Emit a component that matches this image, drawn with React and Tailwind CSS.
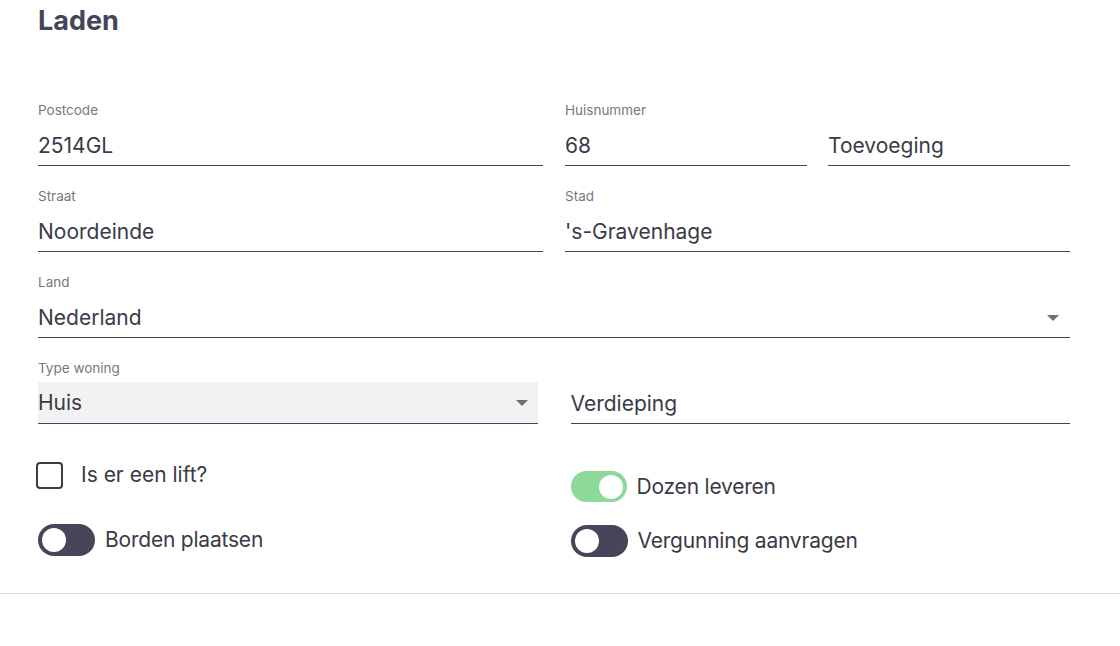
import React from "react";

const FONT = { fontFamily: "Inter, 'Liberation Sans', sans-serif" };

function Arrow() {
  return (
    <svg width="12" height="6" viewBox="0 0 12 6" className="shrink-0">
      <path d="M0 0 L12 0 L6 6 Z" fill="#6f6f74" />
    </svg>
  );
}

function Field({ label, value, select }) {
  return (
    <div className="flex flex-col">
      <div className="h-4 text-[13.5px] leading-4 text-[#77777d]">{label}</div>
      <div className="mt-2 flex h-10 items-center justify-between border-b border-[#45454d] text-[21px] text-[#3b3a46]">
        <span>{value}</span>
        {select && (
          <span className="mr-[11px]">
            <Arrow />
          </span>
        )}
      </div>
    </div>
  );
}

function Toggle({ on, label }) {
  return (
    <div className="flex items-center">
      <div
        className={
          on
            ? "flex h-[31px] w-[56px] items-center justify-end rounded-full bg-[#8cd99a] px-[4px]"
            : "flex h-[32px] w-[57px] items-center justify-start rounded-full bg-[#46455a] px-[4px]"
        }
      >
        <div className="h-[24px] w-[24px] rounded-full bg-white" />
      </div>
      <span className="ml-[10px] text-[21px] tracking-[-0.01em] text-[#3b3a46]">{label}</span>
    </div>
  );
}

export default function App() {
  return (
    <div className="h-[646px] w-[1120px] bg-white" style={FONT}>
      <div className="pl-[38px] pr-[50px]">
        <h1 className="pt-[5px] text-[27px] font-bold leading-8 text-[#45445a]">Laden</h1>
        <div className="mt-[65px] grid grid-cols-2 gap-x-[22px] gap-y-[22px]">
          <Field label="Postcode" value="2514GL" />
          <div className="grid grid-cols-2 gap-x-[21px]">
            <Field label="Huisnummer" value="68" />
            <Field label="" value="Toevoeging" />
          </div>
          <Field label="Straat" value="Noordeinde" />
          <Field label="Stad" value="'s-Gravenhage" />
          <div className="col-span-2">
            <Field label="Land" value="Nederland" select />
          </div>
        </div>
        <div className="mt-[22px] grid grid-cols-2 gap-x-[33px]">
          <div className="flex flex-col">
            <div className="h-4 text-[13.5px] leading-4 text-[#77777d]">Type woning</div>
            <div className="mt-[6px] flex h-[42px] items-center justify-between border-b border-[#34476b] bg-[#f2f2f3] text-[21px] text-[#3b3a46]">
              <span>Huis</span>
              <span className="mr-[10px]">
                <Arrow />
              </span>
            </div>
          </div>
          <div className="flex flex-col">
            <div className="h-4" />
            <div className="mt-2 flex h-10 items-center border-b border-[#45454d] text-[21px] text-[#3b3a46]">
              Verdieping
            </div>
          </div>
          <div className="flex flex-col">
            <label className="mt-[37px] -ml-[2px] flex h-[28px] items-center">
              <span className="h-[27px] w-[27px] rounded-[4px] border-2 border-[#3b3a46]" />
              <span className="ml-[18px] text-[21px] text-[#3b3a46]">Is er een lift?</span>
            </label>
            <div className="mt-[35px]">
              <Toggle label="Borden plaatsen" />
            </div>
          </div>
          <div className="flex flex-col">
            <div className="mt-[47px]">
              <Toggle on label="Dozen leveren" />
            </div>
            <div className="mt-[22px]">
              <Toggle label="Vergunning aanvragen" />
            </div>
          </div>
        </div>
      </div>
      <div className="mt-[36px] border-t border-[#dedede]" />
    </div>
  );
}
